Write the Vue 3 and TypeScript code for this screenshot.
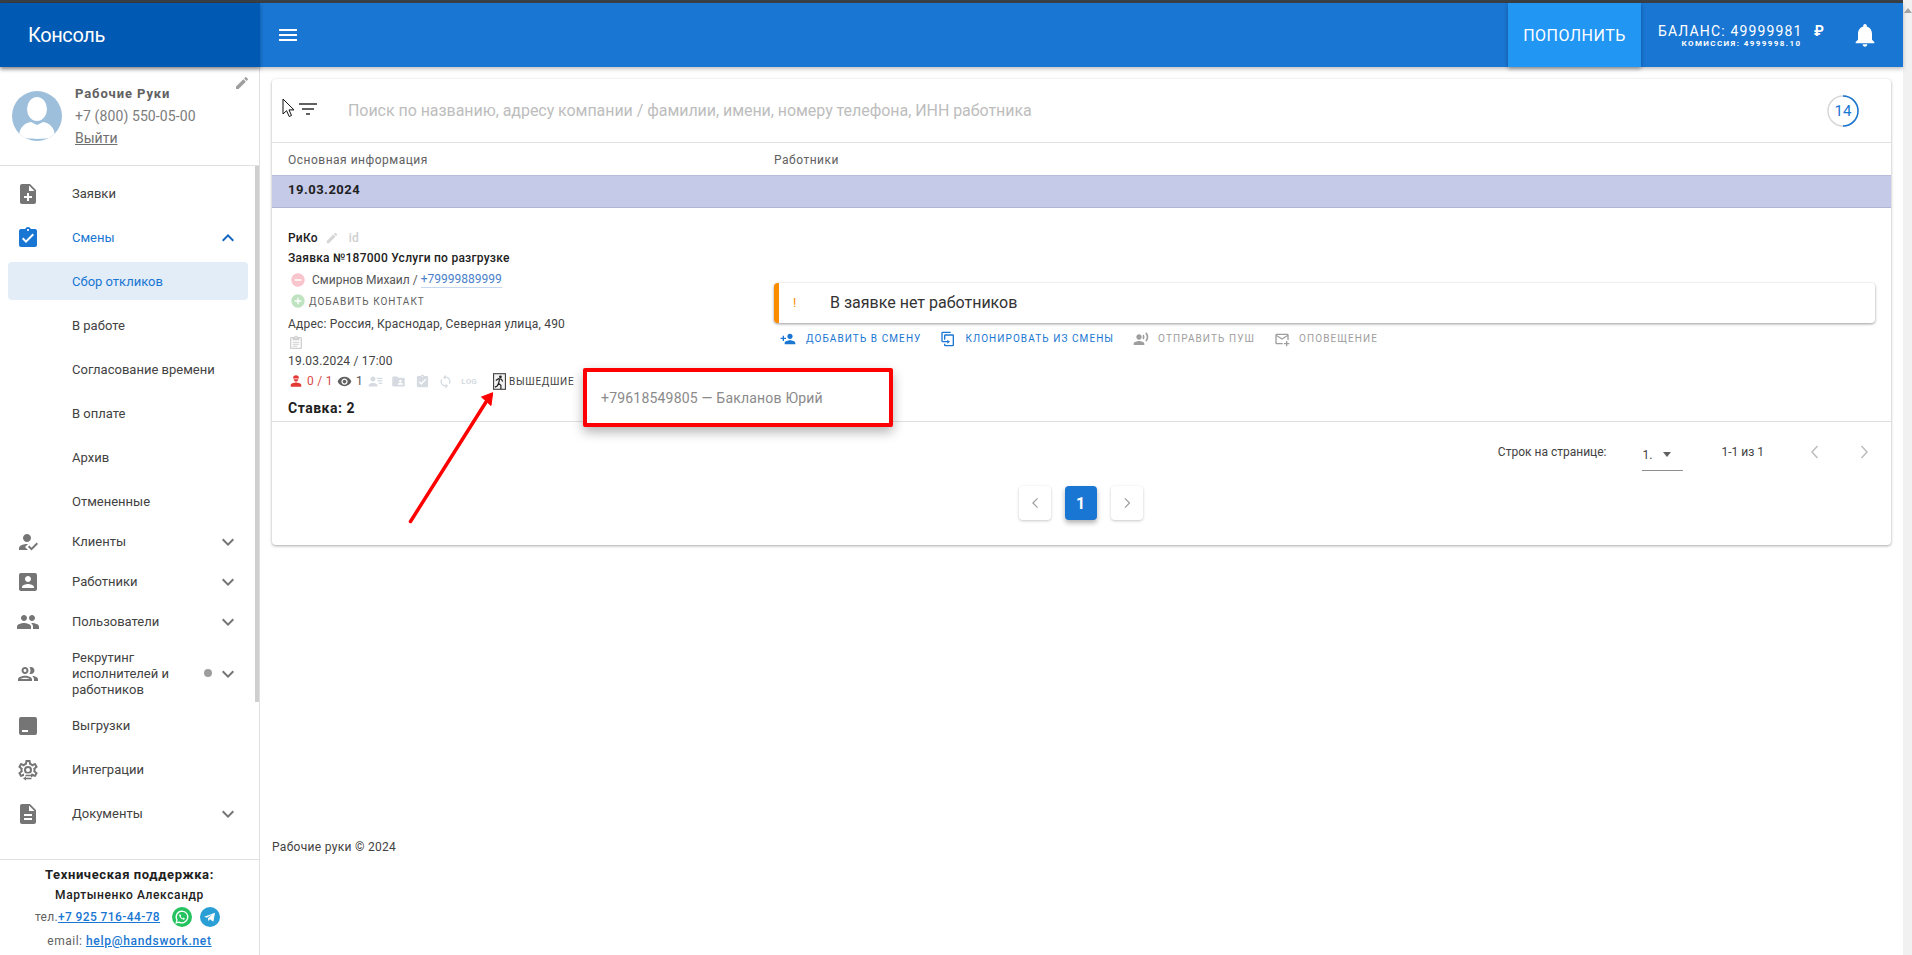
<template>
  <div class="page">
    <div class="shell">
      <div class="strip"></div>
      <header class="topbar">
        <div class="brand">Консоль</div>
        <button class="menu-btn" type="button">
          <svg viewBox="0 0 24 24" class="ic24"><path :d="icons.menu" /></svg>
        </button>
        <div class="spacer"></div>
        <button class="topup" type="button">Пополнить</button>
        <div class="balance">
          <div class="balance-main"><span>БАЛАНС: 49999981</span><span class="rub">₽</span></div>
          <div class="balance-sub">КОМИССИЯ: 4999998.10</div>
        </div>
        <svg viewBox="0 0 24 24" class="bell"><path :d="icons.bell" /></svg>
      </header>

      <div class="body">
        <aside class="sidebar">
          <div class="user">
            <svg viewBox="0 0 50 50" class="avatar">
              <defs>
                <clipPath id="avatar-clip"><circle cx="25" cy="25" r="25" /></clipPath>
              </defs>
              <circle cx="25" cy="25" r="25" fill="#9dbfdc" />
              <g clip-path="url(#avatar-clip)" fill="#fff">
                <ellipse cx="25" cy="18" rx="10" ry="12" />
                <path d="M7 46c0-10 6-14 12-15l6 3 6-3c6 1 12 5 12 15-6 2.500-30 2.500-36 0z" />
              </g>
            </svg>
            <div class="user-text">
              <div class="user-name">Рабочие Руки</div>
              <div class="user-phone">+7 (800) 550-05-00</div>
              <a class="user-exit">Выйти</a>
            </div>
            <svg viewBox="0 0 24 24" class="user-edit"><path :d="icons.pencil" /></svg>
          </div>

          <div class="nav-wrap">
            <nav class="nav">
              <template v-for="item in menu" :key="item.label">
                <div class="nav-item" :class="[item.size, { active: item.active }]">
                  <svg viewBox="0 0 24 24" class="nav-icon" fill-rule="evenodd">
                    <path :d="item.icon" />
                    <path
                      v-if="item.label === 'Интеграции'"
                      d="M8 15.500h8v7H8z"
                      fill="#fff"
                    />
                    <path
                      v-if="item.label === 'Интеграции'"
                      d="M15 15.500l3 2-3 2v-1.300H9.500v-1.400H15zM10 18.500v1.300h5.500v1.400H10v1.300l-3-2z"
                    />
                  </svg>
                  <span class="nav-label">{{ item.label }}</span>
                  <span v-if="item.dot" class="nav-dot"></span>
                  <svg v-if="item.chevron" viewBox="0 0 24 24" class="nav-chevron">
                    <path :d="item.active ? icons.expandLess : icons.expandMore" />
                  </svg>
                </div>
                <div v-if="item.children" class="sub">
                  <div
                    v-for="(child, i) in item.children"
                    :key="child"
                    class="sub-item"
                    :class="{ current: i === 0 }"
                  >
                    <span>{{ child }}</span>
                  </div>
                </div>
              </template>
            </nav>
            <div class="side-scroll"></div>
          </div>

          <div class="support">
            <div class="support-title">Техническая поддержка:</div>
            <div class="support-name">Мартыненко Александр</div>
            <div class="support-tel">
              <span>тел.</span><a>+7 925 716-44-78</a>
              <svg viewBox="0 0 24 24" class="chat wa">
                <circle cx="12" cy="12" r="12" fill="#25c35f" />
                <path
                  d="M12 5a7 7 0 0 0-6 10.600L5 19l3.500-.9A7 7 0 1 0 12 5z"
                  fill="none"
                  stroke="#fff"
                  stroke-width="1.500"
                />
                <path
                  d="M9.500 8.500c-.6.300-1 1-.8 2 .4 2 2.400 4 4.600 4.600 1 .2 1.800-.2 2.100-1 .1-.4-.1-.6-1.500-1.200-.3-.1-.5 0-.7.300l-.4.500c-1-.4-2-1.400-2.400-2.300l.4-.5c.2-.2.200-.4.100-.7-.5-1.300-.8-1.500-1.400-.7z"
                  fill="#fff"
                />
              </svg>
              <svg viewBox="0 0 24 24" class="chat">
                <circle cx="12" cy="12" r="12" fill="#2a9fd6" />
                <path d="M5 11.800l13-5-2 11-4-3-2 2-.5-3.300 5.500-4.700-7 4.200z" fill="#fff" />
              </svg>
            </div>
            <div class="support-mail"><span>email:</span> <a>help@handswork.net</a></div>
          </div>
        </aside>

        <main class="main">
          <section class="card">
            <div class="search">
              <svg viewBox="0 0 24 24" class="filter"><path :d="icons.filter" /></svg>
              <span class="search-hint">Поиск по названию, адресу компании / фамилии, имени, номеру телефона, ИНН работника</span>
              <span class="timer">
                <svg viewBox="0 0 32 32">
                  <circle cx="16" cy="16" r="15" fill="none" stroke="#d8d8d8" stroke-width="1.500" />
                  <path d="M16 1a15 15 0 0 1 0 30" fill="none" stroke="#1976d2" stroke-width="1.500" />
                </svg>
                <span>14</span>
              </span>
            </div>

            <div class="thead">
              <div class="col-info">Основная информация</div>
              <div>Работники</div>
            </div>
            <div class="date-row">19.03.2024</div>

            <div class="row">
              <div class="col-info info">
                <div class="l-name">
                  <b>РиКо</b>
                  <svg viewBox="0 0 24 24" class="pale-pencil"><path :d="icons.pencil" /></svg>
                  <span class="pale-id">id</span>
                </div>
                <div class="l-order">Заявка №187000 Услуги по разгрузке</div>
                <div class="l-contact">
                  <svg viewBox="0 0 24 24" class="round minus"><path :d="icons.minus" /></svg>
                  <span>Смирнов Михаил /</span>
                  <a class="phone">+79999889999</a>
                </div>
                <div class="l-add">
                  <svg viewBox="0 0 24 24" class="round plus"><path :d="icons.plus" /></svg>
                  <span>Добавить контакт</span>
                </div>
                <div class="l-addr">Адрес: Россия, Краснодар, Северная улица, 490</div>
                <div class="l-clip">
                  <svg viewBox="0 0 24 24"><path :d="icons.clipboard" /></svg>
                </div>
                <div class="l-date">19.03.2024 / 17:00</div>
                <div class="l-stats">
                  <svg viewBox="0 0 24 24" class="s-worker">
                    <path d="M12 2c-3 0-5 2-5 4.500v1h10v-1C17 4 15 2 12 2zM8 9c.5 2.500 2 4 4 4s3.500-1.500 4-4H8zM12 14.500c-4 0-9 1.800-9 4.500v3h18v-3c0-2.700-5-4.500-9-4.500z" />
                  </svg>
                  <span class="s-count">0 / 1</span>
                  <svg viewBox="0 0 24 24" class="s-eye"><path :d="icons.eye" /></svg>
                  <span class="s-views">1</span>
                  <svg viewBox="0 0 24 24" class="s-pale first"><path :d="icons.contacts" /></svg>
                  <svg viewBox="0 0 24 24" class="s-pale"><path :d="icons.folder" /></svg>
                  <svg viewBox="0 0 24 24" class="s-pale"><path :d="icons.check" /></svg>
                  <svg viewBox="0 0 24 24" class="s-pale"><path :d="icons.sync" /></svg>
                  <span class="s-log">LOG</span>
                  <svg viewBox="0 0 14 18" class="s-exit">
                    <rect x="0.600" y="0.600" width="12.800" height="16.800" fill="#f2f2f2" stroke="#444" stroke-width="1.200" />
                    <circle cx="8" cy="4" r="1.500" fill="#222" />
                    <path d="M3 8l3-2 3 .5 1.500 2.500M7 7l-1 4 2.500 2v4M6 11l-1.500 3L2 15" fill="none" stroke="#222" stroke-width="1.300" />
                  </svg>
                  <span class="s-left">Вышедшие</span>
                </div>
                <div class="l-rate">Ставка: 2</div>
              </div>
              <div class="workers">
                <div class="alert">
                  <span class="alert-mark">!</span>
                  <span>В заявке нет работников</span>
                </div>
                <div class="actions">
                  <span class="act blue first">
                    <svg viewBox="0 0 24 24"><path :d="icons.personAdd" /></svg>Добавить в смену
                  </span>
                  <span class="act blue">
                    <svg viewBox="0 0 24 24"><path :d="icons.clone" /></svg>Клонировать из смены
                  </span>
                  <span class="act">
                    <svg viewBox="0 0 24 24"><path :d="icons.voice" /></svg>Отправить пуш
                  </span>
                  <span class="act">
                    <svg viewBox="0 0 24 24"><path :d="icons.mail" /></svg>Оповещение
                  </span>
                </div>
              </div>
            </div>

            <div class="table-foot">
              <span>Строк на странице:</span>
              <span class="per-page"><span>1.</span><i class="caret"></i></span>
              <span class="range">1-1 из 1</span>
              <svg viewBox="0 0 24 24" class="pg-arrow"><path d="M14.500 6L9 12l5.500 6" /></svg>
              <svg viewBox="0 0 24 24" class="pg-arrow last"><path d="M9.500 6l5.500 6-5.500 6" /></svg>
            </div>

            <div class="pager">
              <button type="button" class="pg">
                <svg viewBox="0 0 24 24"><path d="M15 6.500L9.500 12l5.500 5.500" /></svg>
              </button>
              <button type="button" class="pg on">1</button>
              <button type="button" class="pg">
                <svg viewBox="0 0 24 24"><path d="M9.500 6.500L15 12l-5.500 5.500" /></svg>
              </button>
            </div>
          </section>
          <footer class="copy">Рабочие руки © 2024</footer>
        </main>
      </div>
    </div>
    <div class="page-scroll"><i></i></div>

    <!-- пометки поверх скриншота -->
    <svg class="cursor" viewBox="0 0 14 20">
      <path d="M1 1v15l3.600-3.300 2.600 5.800 2.300-1-2.500-5.600H12z" fill="#fff" stroke="#111" stroke-width="1" />
    </svg>
    <svg class="arrow" viewBox="0 0 100 140">
      <path d="M2.500 133.500L78 14" stroke="#f00" stroke-width="3.500" stroke-linecap="round" fill="none" />
      <path d="M84.700 4.700L73.500 9l9.500 8.500z" fill="#f00" stroke="#f00" stroke-width="1" />
    </svg>
    <div class="popup">+79618549805 — Бакланов Юрий</div>
  </div>
</template>

<script setup lang="ts">
interface MenuItem {
  label: string
  icon: string
  size?: 'tall' | 'wide' | 'triple'
  chevron?: boolean
  active?: boolean
  dot?: boolean
  children?: string[]
}

const icons = {
  menu: 'M3 18h18v-2H3v2zm0-5h18v-2H3v2zm0-7v2h18V6H3z',
  bell: 'M12 22c1.100 0 2-.900 2-2h-4c0 1.100.890 2 2 2zm6-6v-5c0-3.070-1.640-5.640-4.500-6.320V4c0-.830-.670-1.500-1.500-1.500s-1.500.670-1.500 1.500v.680C7.630 5.360 6 7.920 6 11v5l-2 2v1h16v-1l-2-2z',
  pencil: 'M3 17.250V21h3.750L17.810 9.940l-3.750-3.750L3 17.250zM20.710 7.040c.390-.390.390-1.020 0-1.410l-2.340-2.340c-.390-.390-1.020-.390-1.410 0l-1.830 1.830 3.750 3.750 1.830-1.830z',
  filter: 'M10 18h4v-2h-4v2zM3 6v2h18V6H3zm3 7h12v-2H6v2z',
  expandMore: 'M7.410 8.590L12 13.170l4.590-4.580L18 10l-6 6-6-6 1.410-1.410z',
  expandLess: 'M12 8l-6 6 1.410 1.410L12 10.830l4.590 4.580L18 14z',
  minus: 'M12 2C6.480 2 2 6.480 2 12s4.480 10 10 10 10-4.480 10-10S17.520 2 12 2zm5 11H7v-2h10v2z',
  plus: 'M12 2C6.480 2 2 6.480 2 12s4.480 10 10 10 10-4.480 10-10S17.520 2 12 2zm5 11h-4v4h-2v-4H7v-2h4V7h2v4h4v2z',
  clipboard: 'M19 3h-4.180C14.400 1.840 13.300 1 12 1c-1.300 0-2.400.840-2.820 2H5c-1.100 0-2 .900-2 2v14c0 1.100.900 2 2 2h14c1.100 0 2-.900 2-2V5c0-1.100-.900-2-2-2zm-7 0c.550 0 1 .450 1 1s-.450 1-1 1-1-.450-1-1 .450-1 1-1zm7 16H5V5h2v3h10V5h2v14zM7 10h10v1.500H7zM7 13h10v1.500H7zM7 16h7v1.500H7z',
  eye: 'M12 4.500C7 4.500 2.730 7.610 1 12c1.730 4.390 6 7.500 11 7.500s9.270-3.110 11-7.500c-1.730-4.390-6-7.500-11-7.500zM12 17c-2.760 0-5-2.240-5-5s2.240-5 5-5 5 2.240 5 5-2.240 5-5 5zm0-8c-1.660 0-3 1.340-3 3s1.340 3 3 3 3-1.340 3-3-1.340-3-3-3z',
  contacts: 'M8 12c2.210 0 4-1.790 4-4S10.210 4 8 4 4 5.790 4 8s1.790 4 4 4zm0 2c-2.670 0-7 1.340-7 4v2h14v-2c0-2.660-4.330-4-7-4zM14 6h9v2h-9zM15 10h8v2h-8zM17 14h6v2h-6z',
  folder: 'M20 6h-8l-2-2H4c-1.100 0-1.990.900-1.990 2L2 18c0 1.100.900 2 2 2h16c1.100 0 2-.900 2-2V8c0-1.100-.900-2-2-2zm-5 3c1.100 0 2 .900 2 2s-.900 2-2 2-2-.900-2-2 .900-2 2-2zm4 8h-8v-1c0-1.330 2.670-2 4-2s4 .670 4 2v1z',
  check: 'M19 3h-4.180C14.400 1.840 13.300 1 12 1c-1.300 0-2.400.840-2.820 2H5c-1.100 0-2 .900-2 2v14c0 1.100.900 2 2 2h14c1.100 0 2-.900 2-2V5c0-1.100-.900-2-2-2zm-7 0c.550 0 1 .450 1 1s-.450 1-1 1-1-.450-1-1 .450-1 1-1zm-2 14l-4-4 1.410-1.410L10 14.170l6.590-6.590L18 9l-8 8z',
  sync: 'M12 4V1L8 5l4 4V6c3.310 0 6 2.690 6 6 0 1.010-.250 1.970-.700 2.800l1.460 1.460C19.540 15.030 20 13.570 20 12c0-4.420-3.580-8-8-8zm0 14c-3.310 0-6-2.690-6-6 0-1.010.250-1.970.700-2.800L5.240 7.740C4.460 8.970 4 10.430 4 12c0 4.420 3.580 8 8 8v3l4-4-4-4v3z',
  personAdd: 'M15 12c2.210 0 4-1.790 4-4s-1.790-4-4-4-4 1.790-4 4 1.790 4 4 4zm-9-2V7H4v3H1v2h3v3h2v-3h3v-2H6zm9 4c-2.670 0-8 1.340-8 4v2h16v-2c0-2.660-5.330-4-8-4z',
  clone: 'M11 17H4a2 2 0 0 1-2-2V3a2 2 0 0 1 2-2h12v2H4v12h7v-2l4 3-4 3v-2M19 21V7H8v6H6V7a2 2 0 0 1 2-2h11a2 2 0 0 1 2 2v14a2 2 0 0 1-2 2H8a2 2 0 0 1-2-2v-2h2v2h11z',
  voice: 'M9 13c2.210 0 4-1.790 4-4s-1.790-4-4-4-4 1.790-4 4 1.790 4 4 4zm0 2c-2.670 0-8 1.340-8 4v2h16v-2c0-2.660-5.330-4-8-4zm6.760-9.640l-1.680 1.690c.840 1.180.840 2.710 0 3.890l1.680 1.690c2.020-2.020 2.020-5.070 0-7.270zM20.070 2l-1.630 1.630c2.770 3.020 2.770 7.560 0 10.740L20.070 16c3.900-3.890 3.910-9.950 0-14z',
  mail: 'M13 19c0-.340.040-.670.090-1H4V8l8 5 8-5v5.090c.720.120 1.390.370 2 .720V6c0-1.100-.900-2-2-2H4c-1.100 0-2 .900-2 2v12c0 1.100.900 2 2 2h9.090c-.050-.330-.090-.660-.090-1M20 6l-8 5-8-5h16m0 9v3h3v2h-3v3h-2v-3h-3v-2h3v-3h2z',
}

const menu: MenuItem[] = [
  {
    label: 'Заявки',
    size: 'tall',
    icon: 'M14 2H6c-1.100 0-1.990.900-1.990 2L4 20c0 1.100.890 2 1.990 2H18c1.100 0 2-.900 2-2V8l-6-6zm2 14h-3v3h-2v-3H8v-2h3v-3h2v3h3v2zm-3-7V3.500L18.500 9H13z',
  },
  {
    label: 'Смены',
    size: 'tall',
    active: true,
    chevron: true,
    icon: icons.check,
    children: ['Сбор откликов', 'В работе', 'Согласование времени', 'В оплате', 'Архив', 'Отмененные'],
  },
  {
    label: 'Клиенты',
    chevron: true,
    icon: 'M9 17l3-2.940c-.390-.040-.680-.060-1-.060-2.670 0-8 1.340-8 4v2h9l-3-3zm2-5c2.210 0 4-1.790 4-4s-1.790-4-4-4-4 1.790-4 4 1.790 4 4 4zM15.470 20.500L12 17l1.400-1.410 2.070 2.080 5.130-5.170 1.400 1.410z',
  },
  {
    label: 'Работники',
    chevron: true,
    icon: 'M3 5v14c0 1.100.890 2 2 2h14c1.100 0 2-.900 2-2V5c0-1.100-.900-2-2-2H5c-1.110 0-2 .900-2 2zm12 4c0 1.660-1.340 3-3 3s-3-1.340-3-3 1.340-3 3-3 3 1.340 3 3zm-9 8c0-2 4-3.100 6-3.100s6 1.100 6 3.100v1H6v-1z',
  },
  {
    label: 'Пользователи',
    chevron: true,
    icon: 'M16 11c1.660 0 2.990-1.340 2.990-3S17.660 5 16 5c-1.660 0-3 1.340-3 3s1.340 3 3 3zm-8 0c1.660 0 2.990-1.340 2.990-3S9.660 5 8 5C6.340 5 5 6.340 5 8s1.340 3 3 3zm0 2c-2.330 0-7 1.170-7 3.500V19h14v-2.500c0-2.330-4.670-3.500-7-3.500zm8 0c-.290 0-.620.020-.970.050 1.160.840 1.970 1.970 1.970 3.450V19h6v-2.500c0-2.330-4.670-3.500-7-3.500z',
  },
  {
    label: 'Рекрутинг исполнителей и работников',
    size: 'triple',
    chevron: true,
    dot: true,
    icon: 'M9 13.750c-2.340 0-7 1.170-7 3.500V19h14v-1.750c0-2.330-4.660-3.500-7-3.500zM4.340 17c.840-.580 2.870-1.250 4.660-1.250s3.820.670 4.660 1.250H4.340zM9 12c1.930 0 3.500-1.570 3.500-3.500S10.930 5 9 5 5.500 6.570 5.500 8.500 7.070 12 9 12zm0-5c.830 0 1.500.670 1.500 1.500S9.830 10 9 10s-1.500-.670-1.500-1.500S8.170 7 9 7zm7.040 6.810c1.160.840 1.960 1.960 1.960 3.440V19h4v-1.750c0-2.020-3.500-3.170-5.960-3.440zM15 12c1.930 0 3.500-1.570 3.500-3.500S16.930 5 15 5c-.540 0-1.040.130-1.500.350.630.890 1 1.980 1 3.150s-.370 2.260-1 3.150c.460.220.960.350 1.500.350z',
  },
  {
    label: 'Выгрузки',
    icon: 'M5 3h14a2 2 0 0 1 2 2v14a2 2 0 0 1-2 2H5a2 2 0 0 1-2-2V5a2 2 0 0 1 2-2zm1 13v2h6v-2H6z',
  },
  {
    label: 'Интеграции',
    size: 'wide',
    icon: 'M12 8a4 4 0 0 1 4 4 4 4 0 0 1-4 4 4 4 0 0 1-4-4 4 4 0 0 1 4-4m0 2a2 2 0 0 0-2 2 2 2 0 0 0 2 2 2 2 0 0 0 2-2 2 2 0 0 0-2-2m-2 12c-.250 0-.460-.180-.500-.420l-.370-2.650c-.630-.250-1.170-.590-1.690-.990l-2.490 1.010c-.220.080-.490 0-.610-.220l-2-3.460c-.130-.220-.070-.490.120-.640l2.110-1.660L4.500 12l.070-1-2.110-1.630c-.190-.150-.250-.420-.120-.640l2-3.460c.120-.220.390-.310.610-.220l2.490 1c.520-.390 1.060-.730 1.690-.980l.370-2.650c.040-.240.250-.420.500-.420h4c.250 0 .460.180.500.420l.370 2.650c.630.250 1.170.590 1.690.980l2.490-1c.220-.090.490 0 .610.220l2 3.460c.130.220.070.490-.120.640L19.430 11l.070 1-.070 1 2.110 1.630c.190.150.250.420.120.640l-2 3.460c-.120.220-.390.310-.610.220l-2.490-1c-.520.390-1.060.730-1.690.980l-.370 2.650c-.040.240-.250.420-.500.420h-4M11.250 4l-.370 2.610c-1.200.250-2.260.890-3.030 1.780L5.440 7.350l-.750 1.300L6.800 10.200c-.400 1.170-.400 2.440 0 3.600l-2.120 1.560.750 1.300 2.430-1.040c.770.880 1.820 1.520 3.010 1.760l.370 2.620h1.520l.370-2.610c1.190-.250 2.240-.890 3.010-1.770l2.430 1.040.750-1.300-2.120-1.550c.400-1.170.400-2.440 0-3.610l2.110-1.550-.750-1.300-2.410 1.040c-.770-.890-1.830-1.530-3.020-1.770L12.750 4h-1.500z',
  },
  {
    label: 'Документы',
    chevron: true,
    icon: 'M14 2H6c-1.100 0-1.990.900-1.990 2L4 20c0 1.100.890 2 1.990 2H18c1.100 0 2-.900 2-2V8l-6-6zm2 16H8v-2h8v2zm0-4H8v-2h8v2zm-3-5V3.500L18.500 9H13z',
  },
]
</script>

<style>
html,
body {
  margin: 0;
  height: 100%;
  overflow: hidden;
  background: #fff;
}
</style>

<style scoped>
.page {
  position: relative;
  display: flex;
  height: 955px;
  overflow: hidden;
  font-family: Roboto, 'Liberation Sans', sans-serif;
  color: #212121;
  background: #fff;
}

.shell {
  flex: 1;
  min-width: 0;
  display: flex;
  flex-direction: column;
}

.strip {
  height: 3px;
  background: #3b4046;
}

.page-scroll {
  width: 9px;
  background: #f1f1f1;
}

.page-scroll i {
  display: block;
  margin-top: 8px;
  width: 0;
  height: 0;
  border: 4px solid transparent;
  border-top: 0;
  border-bottom: 5px solid #a3a3a3;
  margin-left: 1px;
}

/* шапка */
.topbar {
  position: relative;
  z-index: 3;
  height: 64px;
  display: flex;
  align-items: center;
  background: #1976d2;
  color: #fff;
  box-shadow: 0 2px 4px rgba(0, 0, 0, 0.25);
}

.brand {
  width: 232px;
  height: 100%;
  padding-left: 28px;
  display: flex;
  align-items: center;
  background: #0059b2;
  font-size: 20px;
  letter-spacing: -0.4px;
  box-shadow: 0 2px 4px rgba(0, 0, 0, 0.3);
}

.menu-btn {
  margin-left: 16px;
  padding: 0;
  border: 0;
  background: none;
  display: flex;
}

.ic24 {
  width: 24px;
  height: 24px;
  fill: #fff;
}

.spacer {
  flex: 1;
}

.topup {
  width: 133px;
  height: 100%;
  padding: 0;
  border: 0;
  background: #2196f3;
  color: #fff;
  font: 400 16px Roboto, 'Liberation Sans', sans-serif;
  letter-spacing: 0.5px;
  text-transform: uppercase;
  box-shadow: 0 2px 4px rgba(0, 0, 0, 0.3);
}

.balance {
  width: 167px;
  margin-left: 17px;
  padding-top: 2px;
  text-align: center;
}

.balance-main {
  display: flex;
  justify-content: space-between;
  font-size: 14px;
  line-height: 16px;
  letter-spacing: 1.150px;
}

.rub {
  font-weight: 700;
}

.balance-sub {
  font-size: 8px;
  line-height: 10px;
  font-weight: 700;
  letter-spacing: 1.4px;
}

.bell {
  width: 28px;
  height: 28px;
  margin: 0 24px 0 26px;
  fill: #fff;
}

.body {
  flex: 1;
  min-height: 0;
  display: flex;
}

/* боковая панель */
.sidebar {
  width: 259px;
  flex: none;
  display: flex;
  flex-direction: column;
  border-right: 1px solid #e0e0e0;
}

.user {
  position: relative;
  flex: none;
  height: 99px;
  padding: 24px 0 0 12px;
  box-sizing: border-box;
  display: flex;
  gap: 13px;
  border-bottom: 1px solid #e0e0e0;
}

.avatar {
  width: 50px;
  height: 50px;
  flex: none;
}

.user-text {
  margin-top: -8px;
  font-size: 14px;
  line-height: 22px;
  color: #7c7c7c;
}

.user-name {
  font-size: 13px;
  font-weight: 700;
  color: #616161;
  letter-spacing: 0.9px;
}

.user-phone {
  letter-spacing: 0.1px;
}

.user-exit {
  color: #707070;
  text-decoration: underline;
}

.user-edit {
  position: absolute;
  top: 8px;
  right: 9px;
  width: 16px;
  height: 16px;
  fill: #9e9e9e;
}

.nav-wrap {
  position: relative;
  flex: 1;
  min-height: 0;
}

.nav {
  padding-top: 6px;
}

.nav-item {
  position: relative;
  height: 40px;
  padding-left: 16px;
  display: flex;
  align-items: center;
  font-size: 13px;
  line-height: 16px;
  color: #424242;
}

.nav-item.tall {
  height: 44px;
}

.nav-item.wide {
  height: 48px;
}

.nav-item.triple {
  height: 64px;
}

.nav-item.triple .nav-label {
  width: 108px;
}

.nav-item.active {
  color: #1976d2;
}

.nav-icon {
  width: 24px;
  height: 24px;
  flex: none;
  fill: #757575;
  margin-right: 32px;
}

.nav-item.active .nav-icon {
  fill: #1976d2;
}

.nav-chevron {
  position: absolute;
  left: 216px;
  top: 50%;
  margin-top: -12px;
  width: 24px;
  height: 24px;
  fill: #757575;
}

.nav-item.active .nav-chevron {
  fill: #1565c0;
}

.nav-dot {
  position: absolute;
  left: 204px;
  top: 50%;
  margin-top: -5px;
  width: 8px;
  height: 8px;
  border-radius: 50%;
  background: #9e9e9e;
}

.sub {
  margin: -1px 0;
}

.sub-item {
  height: 44px;
  padding: 3px 8px;
  box-sizing: border-box;
  font-size: 13px;
  color: #424242;
}

.sub-item span {
  display: flex;
  align-items: center;
  width: 240px;
  height: 38px;
  padding-left: 64px;
  box-sizing: border-box;
  border-radius: 4px;
}

.sub-item.current span {
  background: #e3edf8;
  color: #1976d2;
}

.side-scroll {
  position: absolute;
  right: 0;
  top: 0;
  width: 4px;
  height: 536px;
  background: #cfcfcf;
}

.support {
  flex: none;
  height: 96px;
  padding-top: 7px;
  box-sizing: border-box;
  border-top: 1px solid #e0e0e0;
  text-align: center;
  font-size: 12px;
  color: #212121;
}

.support-title {
  font-size: 13px;
  line-height: 16px;
  font-weight: 700;
  letter-spacing: 0.6px;
}

.support-name {
  margin-top: 4px;
  line-height: 16px;
  font-weight: 500;
  letter-spacing: 0.6px;
}

.support-tel {
  display: flex;
  align-items: center;
  justify-content: center;
  height: 24px;
  margin-top: 2px;
  padding-right: 4px;
  color: #616161;
  letter-spacing: 0.3px;
}

.support-tel a,
.support-mail a {
  color: #1976d2;
  font-weight: 500;
  text-decoration: underline;
  letter-spacing: 0.4px;
}

.support-mail a {
  letter-spacing: 0.7px;
}

.chat {
  width: 20px;
  height: 20px;
  margin-left: 8px;
}

.chat.wa {
  margin-left: 12px;
}

.support-mail {
  margin-top: 4px;
  line-height: 16px;
  color: #616161;
  letter-spacing: 0.5px;
}

/* контент */
.main {
  flex: 1;
  min-width: 0;
  padding: 12px 12px 100px;
  display: flex;
  flex-direction: column;
}

.card {
  height: 466px;
  flex: none;
  border-radius: 4px;
  background: #fff;
  box-shadow: 0 1px 3px rgba(0, 0, 0, 0.35);
}

.search {
  height: 64px;
  padding: 0 32px 0 24px;
  display: flex;
  align-items: center;
  box-sizing: border-box;
  border-bottom: 1px solid #e0e0e0;
}

.filter {
  width: 24px;
  height: 24px;
  flex: none;
  fill: #616161;
  margin-top: -4px;
}

.search-hint {
  margin-left: 28px;
  flex: 1;
  font-size: 16px;
  letter-spacing: -0.05px;
  color: #bdbdbd;
}

.timer {
  position: relative;
  width: 32px;
  height: 32px;
  display: flex;
  align-items: center;
  justify-content: center;
  font-size: 15px;
  color: #1976d2;
}

.timer svg {
  position: absolute;
  inset: 0;
}

.thead {
  height: 32px;
  display: flex;
  align-items: center;
  padding-top: 1px;
  box-sizing: border-box;
  font-size: 12px;
  letter-spacing: 0.5px;
  color: #616161;
}

.col-info {
  width: 502px;
  padding-left: 16px;
  flex: none;
  box-sizing: border-box;
}

.date-row {
  height: 33px;
  padding: 0 0 4px 16px;
  display: flex;
  align-items: center;
  background: #c5cae9;
  border-top: 1px solid #b7bcdc;
  border-bottom: 1px solid #b0b5d6;
  box-sizing: border-box;
  font-size: 13px;
  font-weight: 700;
  letter-spacing: 0.5px;
}

.row {
  height: 214px;
  display: flex;
  box-sizing: border-box;
  border-bottom: 1px solid #e0e0e0;
}

.info {
  padding-top: 22px;
  font-size: 12px;
  letter-spacing: 0.2px;
}

.l-name {
  height: 16px;
  display: flex;
  align-items: center;
  line-height: 16px;
}

.l-name b {
  font-weight: 500;
}

.pale-pencil {
  width: 14px;
  height: 14px;
  margin-left: 7px;
  fill: #d6d6d6;
}

.pale-id {
  margin-left: 10px;
  color: #cfcfcf;
  font-weight: 500;
}

.l-order {
  line-height: 24px;
  font-weight: 500;
  letter-spacing: 0.25px;
}

.l-contact {
  height: 20px;
  display: flex;
  align-items: center;
  font-size: 12px;
  letter-spacing: 0;
  color: #555;
}

.round {
  width: 16px;
  height: 16px;
  margin-left: 2px;
  flex: none;
}

.minus {
  fill: #f8c5cc;
}

.plus {
  fill: #bfe3c1;
}

.l-contact span {
  margin-left: 6px;
}

.phone {
  margin-left: 3px;
  color: #4a7fc9;
  border-bottom: 1px solid #c5d8ee;
  line-height: 15px;
}

.l-add {
  height: 22px;
  display: flex;
  align-items: center;
  font-size: 10px;
  color: #616161;
  letter-spacing: 1px;
  text-transform: uppercase;
}

.l-add span {
  margin-left: 3px;
}

.l-addr {
  margin-top: 1px;
  line-height: 22px;
  color: #424242;
}

.l-clip {
  height: 16px;
  display: flex;
  align-items: center;
}

.l-clip svg {
  width: 16px;
  height: 16px;
  fill: #d0d0d0;
}

.l-date {
  line-height: 20px;
  color: #424242;
}

.l-stats {
  height: 20px;
  display: flex;
  align-items: center;
}

.s-worker {
  width: 14px;
  height: 14px;
  margin-left: 1px;
  fill: #e53935;
}

.s-count {
  margin-left: 4px;
  color: #d84a4a;
  letter-spacing: 0.3px;
}

.s-eye {
  width: 15px;
  height: 15px;
  margin-left: 4px;
  fill: #616161;
}

.s-views {
  margin-left: 4px;
  color: #555;
}

.s-pale {
  width: 15px;
  height: 15px;
  margin-left: 8.500px;
  fill: #d5dbe0;
}

.s-pale.first {
  margin-left: 5px;
}

.s-log {
  margin-left: 8px;
  font-size: 8px;
  font-weight: 700;
  color: #d5dbe0;
}

.s-exit {
  width: 13px;
  height: 17px;
  margin-left: 16px;
}

.s-left {
  margin-left: 3px;
  font-size: 10px;
  color: #424242;
  letter-spacing: 0.7px;
  text-transform: uppercase;
}

.l-rate {
  margin-top: 7px;
  line-height: 20px;
  font-size: 14px;
  font-weight: 700;
  letter-spacing: 0.5px;
}

.workers {
  flex: 1;
  min-width: 0;
  padding-right: 16px;
  align-self: center;
  margin-top: 4px;
}

.alert {
  height: 40px;
  display: flex;
  align-items: center;
  box-sizing: border-box;
  border-left: 5px solid #fb8c00;
  border-radius: 4px;
  background: #fff;
  box-shadow: 0 1px 3px rgba(0, 0, 0, 0.4);
  font-size: 16px;
  color: #333;
}

.alert-mark {
  width: 51px;
  padding-left: 14px;
  box-sizing: border-box;
  font-size: 13px;
  color: #fb8c00;
}

.actions {
  display: flex;
  align-items: center;
  height: 24px;
  margin-top: 4px;
  padding-left: 6px;
}

.act {
  display: flex;
  align-items: center;
  margin-left: 19px;
  font-size: 10px;
  letter-spacing: 1.080px;
  text-transform: uppercase;
  color: #9e9e9e;
}

.act.first {
  margin-left: 0;
}

.act svg {
  width: 16px;
  height: 16px;
  margin-right: 9px;
  fill: #9e9e9e;
}

.act.first svg {
  margin-right: 10px;
}

.act.blue {
  color: #1976d2;
}

.act.blue svg {
  fill: #1976d2;
}

.table-foot {
  height: 60px;
  padding: 0 15px 0 0;
  display: flex;
  align-items: center;
  justify-content: flex-end;
  font-size: 12px;
  color: #424242;
}

.per-page {
  width: 41px;
  height: 32px;
  margin-left: 36px;
  display: flex;
  align-items: center;
  justify-content: space-between;
  padding-right: 12px;
  box-sizing: border-box;
  border-bottom: 1px solid #8e8e8e;
  margin-top: 6px;
}

.caret {
  border: 4px solid transparent;
  border-top: 5px solid #616161;
  border-bottom: 0;
}

.range {
  margin-left: 38px;
  margin-right: 39px;
}

.pg-arrow {
  width: 24px;
  height: 24px;
  fill: none;
  stroke: #bdbdbd;
  stroke-width: 1.500;
}

.pg-arrow.last {
  margin-left: 25px;
}

.pager {
  display: flex;
  justify-content: center;
  gap: 14px;
  margin-top: 4px;
  padding-right: 2px;
}

.pg {
  width: 32px;
  height: 34px;
  padding: 0;
  border: 0;
  border-radius: 4px;
  background: #fff;
  display: flex;
  align-items: center;
  justify-content: center;
  box-shadow: 0 1px 3px rgba(0, 0, 0, 0.22);
  font: 700 16px Roboto, 'Liberation Sans', sans-serif;
}

.pg svg {
  width: 20px;
  height: 20px;
  fill: none;
  stroke: #9e9e9e;
  stroke-width: 1.500;
}

.pg.on {
  background: #1976d2;
  color: #fff;
  box-shadow: 0 3px 5px rgba(0, 0, 0, 0.3);
}

.copy {
  margin-top: auto;
  font-size: 12px;
  line-height: 16px;
  letter-spacing: 0.3px;
  color: #424242;
}

/* пометки */
.cursor {
  position: absolute;
  left: 282px;
  top: 98px;
  width: 14px;
  height: 20px;
}

.arrow {
  position: absolute;
  left: 408px;
  top: 388px;
  width: 100px;
  height: 140px;
}

.popup {
  position: absolute;
  left: 583px;
  top: 368px;
  width: 310px;
  height: 59px;
  padding-left: 14px;
  display: flex;
  align-items: center;
  box-sizing: border-box;
  border: 4px solid #f00;
  border-radius: 2px;
  background: #fff;
  box-shadow: 0 5px 12px rgba(0, 0, 0, 0.3);
  font-size: 14px;
  letter-spacing: 0.2px;
  color: #8a8a8a;
}
</style>
